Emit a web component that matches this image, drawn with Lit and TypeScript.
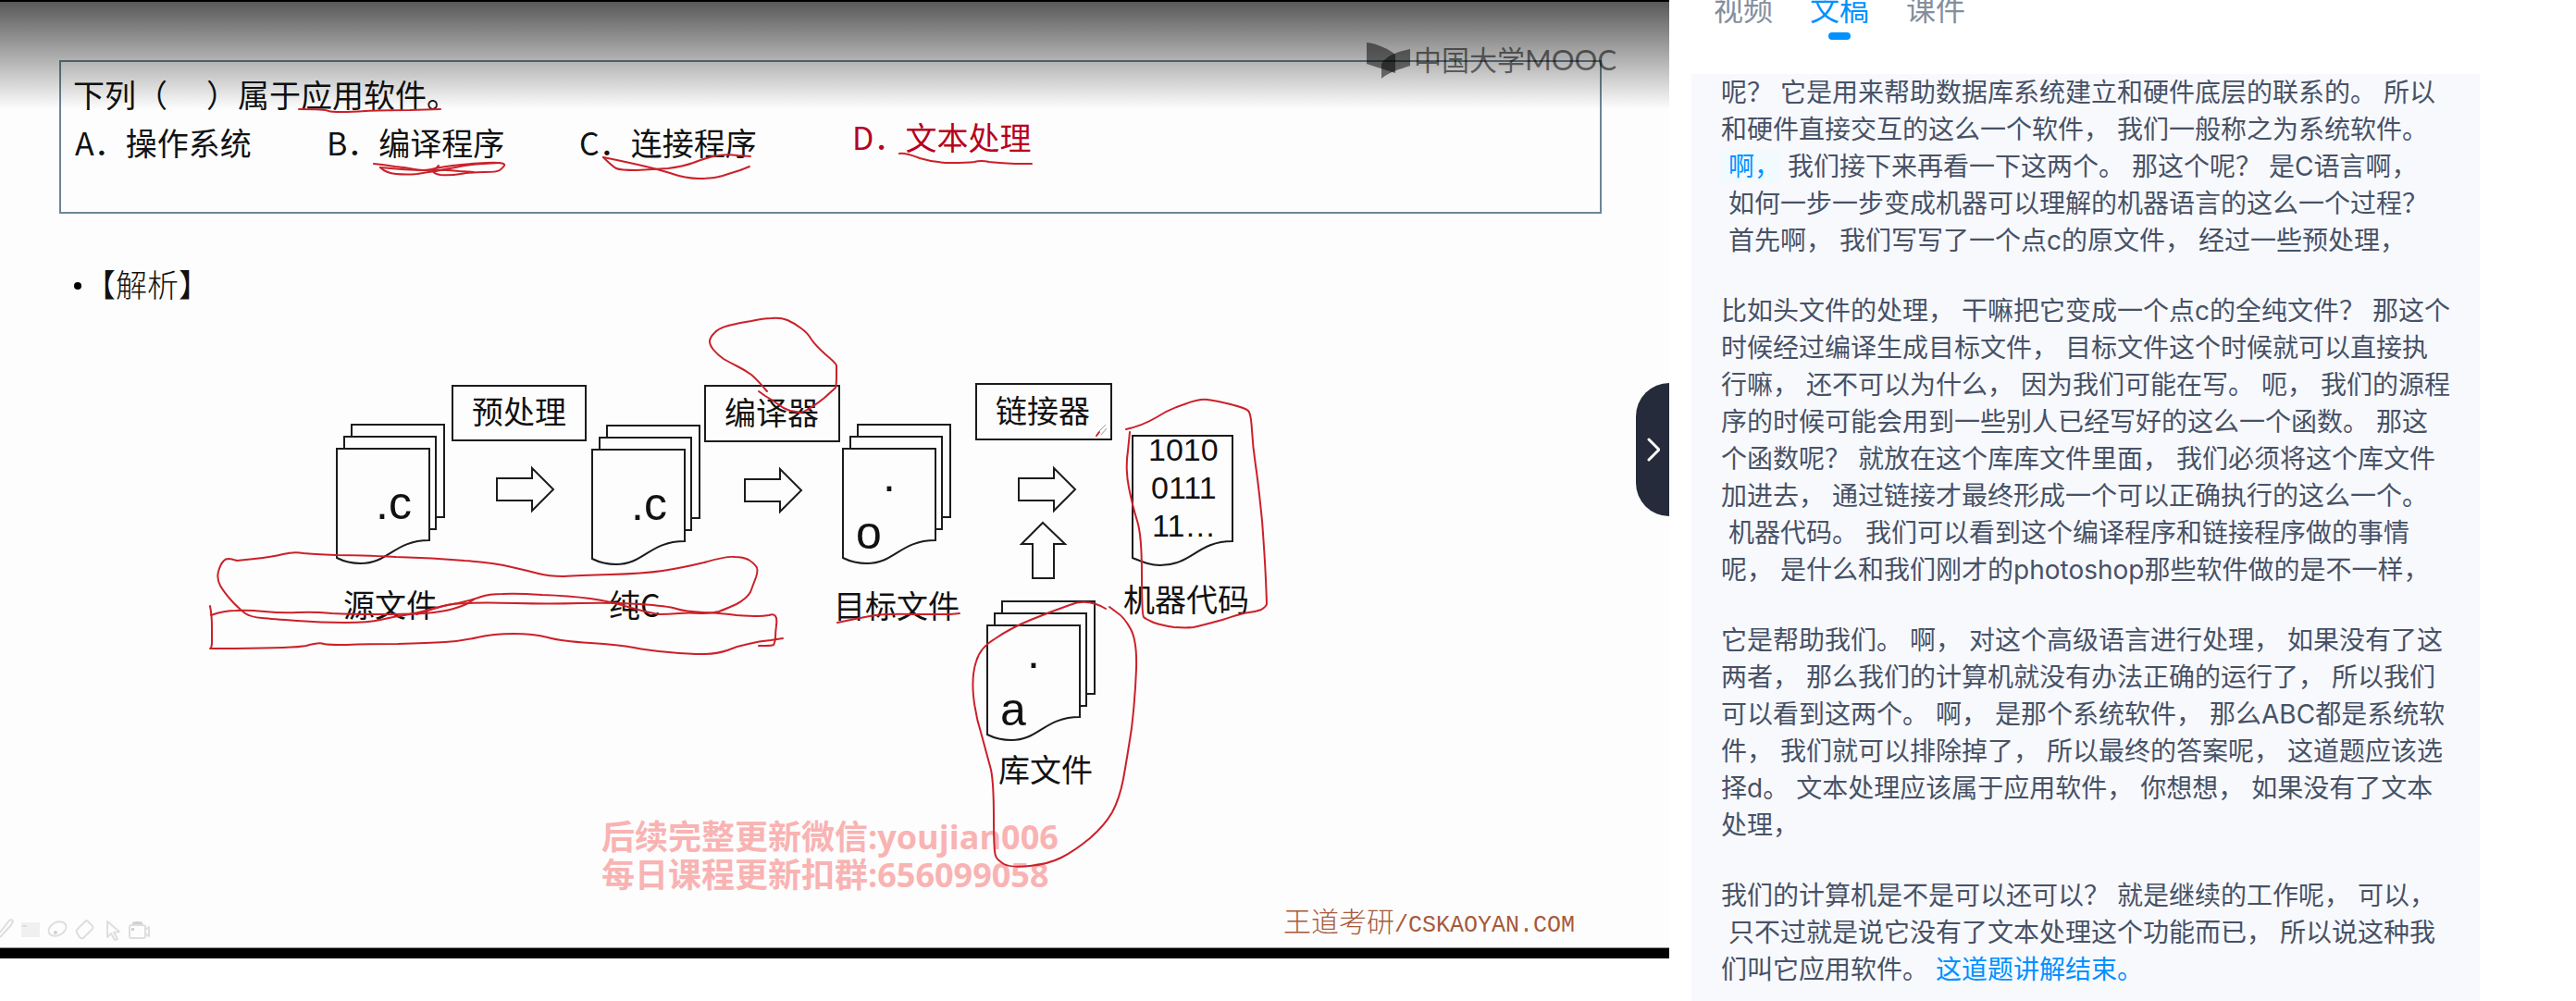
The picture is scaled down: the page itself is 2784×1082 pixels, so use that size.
import { LitElement, html, svg, css } from "lit";
import { customElement, property, state } from "lit/decorators.js";
import { classMap } from "lit/directives/class-map.js";

type Point = [number, number];

/** Turns the points of a pen stroke into a path rounded at the midpoints. */
function stroke(points: Point[]): string {
  const [first, ...rest] = points;
  let d = `M${first[0]} ${first[1]}`;
  for (let i = 0; i < rest.length - 1; i++) {
    const [x, y] = rest[i];
    const [nx, ny] = rest[i + 1];
    d += `Q${x} ${y} ${Math.round((x + nx) / 2)} ${Math.round((y + ny) / 2)}`;
  }
  const last = rest[rest.length - 1];
  return `${d}L${last[0]} ${last[1]}`;
}

const PEN_STROKES: Point[][] = [
  [[323, 118], [352, 118], [358, 121], [380, 121], [410, 119], [476, 118]],
  [[404, 177], [415, 178], [439, 181], [457, 185], [474, 181], [504, 177], [547, 175], [543, 182], [537, 186], [510, 186], [486, 190], [465, 187], [474, 179]],
  [[411, 181], [417, 187], [439, 189], [462, 186], [480, 183], [504, 178], [540, 176]],
  [[411, 181], [440, 184], [480, 183], [512, 186]],
  [[652, 170], [662, 180], [670, 184], [706, 183], [738, 180], [759, 172], [783, 166], [811, 169]],
  [[652, 170], [706, 181], [741, 193], [771, 193], [790, 187], [810, 180]],
  [[972, 166], [978, 165], [1010, 176], [1045, 176], [1060, 173], [1078, 176], [1115, 177]],
  [[829, 423], [818, 410], [805, 400], [789, 392], [775, 383], [767, 373], [767, 365], [776, 355], [798, 349], [825, 344], [843, 343], [858, 349], [873, 360], [881, 373], [903, 392], [904, 398], [904, 416], [901, 421], [881, 438], [867, 446], [861, 445], [847, 442], [834, 432], [820, 423]],
  [[256, 606], [245, 602], [238, 610], [234, 625], [242, 640], [258, 658], [271, 667], [294, 669], [347, 673], [399, 673], [423, 667], [450, 663], [477, 655], [512, 648], [528, 642], [557, 641], [615, 644], [660, 650], [704, 663], [722, 664], [745, 662], [769, 663], [785, 658], [807, 647], [814, 632], [820, 615], [814, 608], [803, 602], [785, 601], [736, 614], [695, 620], [624, 622], [593, 623], [571, 617], [535, 608], [468, 603], [388, 600], [338, 599], [318, 596], [294, 602], [256, 606]],
  [[227, 655], [229, 665], [229, 690], [228, 701]],
  [[228, 665], [242, 660], [267, 659], [305, 663], [338, 661], [379, 664], [437, 664], [480, 661], [500, 655], [512, 648]],
  [[450, 664], [468, 658], [490, 652], [521, 651], [593, 653], [660, 651], [722, 655], [740, 661], [780, 663], [812, 666], [825, 666], [836, 663], [840, 668], [838, 683], [837, 696], [834, 698], [820, 698]],
  [[227, 701], [317, 701], [345, 694], [354, 697], [396, 696], [463, 695], [499, 693], [533, 685], [577, 685], [606, 693], [669, 697], [700, 703], [745, 707], [774, 707], [798, 698], [820, 693], [846, 690]],
  [[905, 673], [924, 669], [956, 663], [1017, 664], [1037, 663]],
  [[1217, 464], [1235, 460], [1264, 442], [1296, 431], [1314, 433], [1346, 441], [1352, 447], [1354, 483], [1360, 523], [1367, 603], [1369, 650], [1368, 656], [1358, 661], [1342, 663], [1299, 676], [1281, 679], [1256, 676], [1238, 669], [1234, 664], [1234, 578], [1224, 547], [1216, 507], [1221, 467]],
  [[1195, 658], [1175, 646], [1136, 661], [1092, 679], [1059, 700], [1050, 730], [1054, 773], [1067, 817], [1074, 847], [1074, 920], [1077, 929], [1092, 938], [1133, 934], [1161, 920], [1194, 892], [1210, 863], [1218, 820], [1227, 753], [1229, 693], [1215, 667], [1199, 656]],
];

@customElement("lecture-slide")
class LectureSlide extends LitElement {
  static styles = css`
    :host {
      display: block;
    }
    .frame {
      display: block;
      width: 100%;
      height: auto;
      background: #fdfdfd;
    }
    text {
      font-family: "Noto Sans CJK SC", sans-serif;
      font-size: 34px;
      fill: #111;
    }
    .answer {
      fill: #b8001c;
    }
    .thin {
      font-weight: 300;
    }
    .bits {
      font-family: "Liberation Sans", sans-serif;
    }
    .ext {
      font-family: "Liberation Sans", sans-serif;
      font-size: 50px;
    }
    .notice {
      font-family: "Open Sans", "Noto Sans CJK SC", sans-serif;
      font-size: 36px;
      font-weight: 700;
      fill: #f9b3b3;
    }
    .site {
      font-size: 30px;
      font-weight: 300;
      fill: #a65a3c;
    }
    .site-latin {
      font-family: "Liberation Mono", monospace;
      font-size: 25px;
    }
    .brand {
      font-size: 30px;
      fill: #000;
      fill-opacity: 0.55;
    }
    .brand-latin {
      font-family: Lato, sans-serif;
      font-size: 31px;
    }
    .outline {
      fill: #fdfdfd;
      stroke: #1c1c1c;
      stroke-width: 2;
    }
    .question {
      fill: none;
      stroke: #6c8795;
      stroke-width: 2;
    }
    .ink {
      fill: none;
      stroke: #cb2029;
      stroke-width: 2;
      stroke-linecap: round;
      stroke-linejoin: round;
    }
    .tool {
      fill: none;
      stroke: #dedede;
      stroke-width: 2;
      stroke-linejoin: round;
    }
    .nib {
      fill: none;
      stroke: #9a9a9a;
      stroke-width: 1;
    }
    .tool-fill {
      fill: #f0f0f0;
    }
    .tool-dark {
      fill: #cfcfcf;
    }
  `;

  private sheets(x: number, y: number) {
    return svg`<g transform="translate(${x} ${y})">
      <path class="outline" d="M16 -26H116V74H16Z" />
      <path class="outline" d="M8 -13H107V87H8Z" />
      <path class="outline" d="M0 0H100V99C62 99 56 124 26 124C14 124 6 121 0 118Z" />
    </g>`;
  }

  private arrow(x: number, y: number) {
    return svg`<path class="outline" transform="translate(${x} ${y})"
      d="M0 -12H38V-23L61 0L38 23V12H0Z" />`;
  }

  render() {
    return html`
      <svg class="frame" viewBox="0 0 1804 1036">
        <defs>
          <linearGradient id="shade" x1="0" y1="0" x2="0" y2="1">
            <stop offset="0" stop-color="#000" stop-opacity="0.65" />
            <stop offset="1" stop-color="#000" stop-opacity="0" />
          </linearGradient>
        </defs>

        <rect class="question" x="65" y="66" width="1665" height="164" />
        <text x="79" y="116">下列（</text>
        <text x="223" y="116">）属于应用软件。</text>
        <text x="81" y="168">A．操作系统</text>
        <text x="353" y="168">B．编译程序</text>
        <text x="626" y="168">C．连接程序</text>
        <text class="answer" x="921" y="162">D．文本处理</text>

        <circle cx="84" cy="309" r="4" />
        <text class="thin" x="91" y="321">【解析】</text>

        <rect class="outline" x="489" y="417" width="144" height="59" />
        <rect class="outline" x="762" y="417" width="145" height="60" />
        <rect class="outline" x="1055" y="415" width="146" height="60" />
        <text x="510" y="458">预处理</text>
        <text x="783" y="459">编译器</text>
        <text x="1076" y="457">链接器</text>

        ${this.sheets(364, 485)} ${this.sheets(640, 486)} ${this.sheets(911, 485)}
        ${this.sheets(1067, 676)}
        <path class="outline" d="M1224 471H1332V585C1294 585 1288 611 1254 611C1242 611 1234 607 1224 603Z" />
        ${this.arrow(537, 529)} ${this.arrow(805, 530)} ${this.arrow(1101, 529)}
        <path class="outline" d="M1127 565L1151 588H1139V625H1116V588H1104Z" />

        <text class="ext" x="406" y="561">.c</text>
        <text class="ext" x="682" y="562">.c</text>
        <text class="ext" x="954" y="531">.</text>
        <text class="ext" x="925" y="593">o</text>
        <text class="ext" x="1110" y="722">.</text>
        <text class="ext" x="1081" y="784">a</text>
        <text class="bits" x="1241" y="498">1010</text>
        <text class="bits" x="1244" y="539">0111</text>
        <text class="bits" x="1245" y="580">11…</text>

        <text x="371" y="667">源文件</text>
        <text x="658" y="667">纯C</text>
        <text x="901" y="668">目标文件</text>
        <text x="1214" y="661">机器代码</text>
        <text x="1079" y="845">库文件</text>

        <text class="notice" x="650" y="918">后续完整更新微信:youjian006</text>
        <text class="notice" x="650" y="959">每日课程更新扣群:656099058</text>
        <text class="site" x="1387" y="1007">王道考研<tspan class="site-latin">/CSKAOYAN.COM</tspan></text>

        ${PEN_STROKES.map((points) => svg`<path class="ink" d=${stroke(points)} />`)}
        <path class="nib" d="M1188 466L1195 459M1190 470L1196 463" />
        <path class="ink" d="M1185 471L1188 467" />

        <g>
          <path class="tool" d="M0 1008L10 995Q13 993 14 996L12 1000L0 1013" />
          <rect class="tool-fill" x="23" y="997" width="20" height="16" />
          <path class="tool" d="M24 1001H29" />
          <ellipse class="tool" cx="62" cy="1004" rx="10" ry="7" transform="rotate(-25 62 1004)" />
          <circle class="tool-dark" cx="60" cy="1008" r="2" />
          <path class="tool" d="M94 995L100 1001Q101 1003 100 1004L90 1014Q88 1015 86 1013L83 1008Q82 1006 84 1004L92 996Z" />
          <path class="tool" d="M116 996V1013L120 1009L124 1016L127 1015L123 1008L129 1007Z" />
          <rect class="tool" x="140" y="1000" width="17" height="14" rx="2" />
          <path class="tool" d="M157 1005L161 1002V1012L157 1009" />
          <path class="tool-dark" d="M143 999V997Q148 995 154 997V999ZM142 1003H145V1006H142Z" />
        </g>

        <rect x="0" y="2" width="1804" height="116" fill="url(#shade)" />
        <rect x="0" y="0" width="1804" height="2" />
        <rect x="0" y="1024" width="1804" height="1" fill="#8a8a8a" />
        <rect x="0" y="1025" width="1804" height="11" />

        <g fill-opacity="0.5">
          <path d="M1477 46C1488 47 1501 53 1508 59V79L1477 69Z" />
          <path d="M1524 53C1510 56 1498 60 1493 69V85C1501 78 1512 75 1524 71Z" />
        </g>
        <text class="brand" x="1528" y="76">中国大学<tspan class="brand-latin">MOOC</tspan></text>
      </svg>
    `;
  }
}

interface Sentence {
  text: string;
  tone?: "current" | "linked";
  continued?: boolean;
  newLine?: boolean;
}

const TRANSCRIPT: Sentence[][] = [
  [
    { text: "呢？", continued: true },
    { text: "它是用来帮助数据库系统建立和硬件底层的联系的。" },
    { text: "所以和硬件直接交互的这么一个软件，" },
    { text: "我们一般称之为系统软件。" },
    { text: "啊，", tone: "current" },
    { text: "我们接下来再看一下这两个。" },
    { text: "那这个呢？" },
    { text: "是C语言啊，" },
    { text: "如何一步一步变成机器可以理解的机器语言的这么一个过程？", newLine: true },
    { text: "首先啊，" },
    { text: "我们写写了一个点c的原文件，" },
    { text: "经过一些预处理，" },
  ],
  [
    { text: "比如头文件的处理，", continued: true },
    { text: "干嘛把它变成一个点c的全纯文件？" },
    { text: "那这个时候经过编译生成目标文件，" },
    { text: "目标文件这个时候就可以直接执行嘛，" },
    { text: "还不可以为什么，" },
    { text: "因为我们可能在写。" },
    { text: "呃，" },
    { text: "我们的源程序的时候可能会用到一些别人已经写好的这么一个函数。" },
    { text: "那这个函数呢？" },
    { text: "就放在这个库库文件里面，" },
    { text: "我们必须将这个库文件加进去，" },
    { text: "通过链接才最终形成一个可以正确执行的这么一个。" },
    { text: "机器代码。" },
    { text: "我们可以看到这个编译程序和链接程序做的事情呢，" },
    { text: "是什么和我们刚才的photoshop那些软件做的是不一样，" },
  ],
  [
    { text: "它是帮助我们。", continued: true },
    { text: "啊，" },
    { text: "对这个高级语言进行处理，" },
    { text: "如果没有了这两者，" },
    { text: "那么我们的计算机就没有办法正确的运行了，" },
    { text: "所以我们可以看到这两个。" },
    { text: "啊，" },
    { text: "是那个系统软件，" },
    { text: "那么ABC都是系统软件，" },
    { text: "我们就可以排除掉了，" },
    { text: "所以最终的答案呢，" },
    { text: "这道题应该选择d。" },
    { text: "文本处理应该属于应用软件，" },
    { text: "你想想，" },
    { text: "如果没有了文本处理，" },
  ],
  [
    { text: "我们的计算机是不是可以还可以？", continued: true },
    { text: "就是继续的工作呢，" },
    { text: "可以，" },
    { text: "只不过就是说它没有了文本处理这个功能而已，" },
    { text: "所以说这种我们叫它应用软件。" },
    { text: "这道题讲解结束。", tone: "linked" },
  ],
];

@customElement("transcript-view")
class TranscriptView extends LitElement {
  @property({ attribute: false }) paragraphs: Sentence[][] = [];

  static styles = css`
    :host {
      display: block;
      padding: 0 30px 0 32px;
      background: #f8f9fd;
      overflow: hidden;
    }
    .paragraph {
      margin: 0 0 36px;
      font: 28px/40px Inter, "Noto Sans CJK SC", sans-serif;
      color: #475266;
      text-spacing-trim: space-all;
      text-autospace: no-autospace;
    }
    .sentence {
      padding-left: 8px;
    }
    .continued {
      padding-left: 0;
    }
    .current {
      color: #0091ff;
      background: #f0faff;
    }
    .linked {
      color: #0091ff;
    }
  `;

  render() {
    return this.paragraphs.map(
      (sentences) =>
        html`<p class="paragraph">${sentences.map(
          (s) =>
            html`${s.newLine ? html`<br />` : ""}<span
              class=${classMap({
                sentence: true,
                continued: !!s.continued,
                current: s.tone === "current",
                linked: s.tone === "linked",
              })}
              >${s.text}</span
            >`
        )}</p>`
    );
  }
}

@customElement("app-root")
class AppRoot extends LitElement {
  @state() private active = "文稿";

  static styles = css`
    :host {
      display: grid;
      grid-template-columns: minmax(0, 1fr) 980px;
      height: 100vh;
      overflow: hidden;
      background: #fff;
    }
    .player {
      position: relative;
      align-self: start;
    }
    .collapse {
      position: absolute;
      top: 40%;
      right: 0;
      display: flex;
      align-items: center;
      justify-content: center;
      width: 36px;
      height: 144px;
      padding: 0;
      border: 0;
      border-radius: 36px 0 0 36px;
      background: #252b3a;
    }
    .chevron {
      width: 16px;
      height: 28px;
      fill: none;
      stroke: #fff;
      stroke-width: 3;
      stroke-linecap: round;
      stroke-linejoin: round;
    }
    .side {
      display: flex;
      flex-direction: column;
      min-height: 0;
      padding: 0 104px 0 24px;
    }
    .tabs {
      display: flex;
      gap: 40px;
      height: 88px;
      margin-top: -8px;
      padding-left: 24px;
    }
    .tab {
      display: flex;
      flex-direction: column;
      align-items: center;
      gap: 11px;
      padding: 0;
      border: 0;
      background: none;
      color: #848e9e;
      font: 32px/32px "Noto Sans CJK SC", sans-serif;
    }
    .tab[aria-selected="true"] {
      color: #0091ff;
    }
    .tab[aria-selected="true"]::after {
      content: "";
      width: 24px;
      height: 8px;
      border-radius: 4px;
      background: #0091ff;
    }
    .transcript {
      flex: 1;
      min-height: 0;
    }
  `;

  render() {
    return html`
      <main class="player">
        <lecture-slide></lecture-slide>
        <button class="collapse" aria-label="收起">
          <svg class="chevron" viewBox="0 0 16 28"><path d="M4 3L15 14L4 25" /></svg>
        </button>
      </main>
      <aside class="side">
        <div class="tabs" role="tablist">
          ${["视频", "文稿", "课件"].map(
            (name) => html`<button
              class="tab"
              role="tab"
              aria-selected=${this.active === name ? "true" : "false"}
              @click=${() => (this.active = name)}
            >${name}</button>`
          )}
        </div>
        <transcript-view class="transcript" .paragraphs=${TRANSCRIPT}></transcript-view>
      </aside>
    `;
  }
}
